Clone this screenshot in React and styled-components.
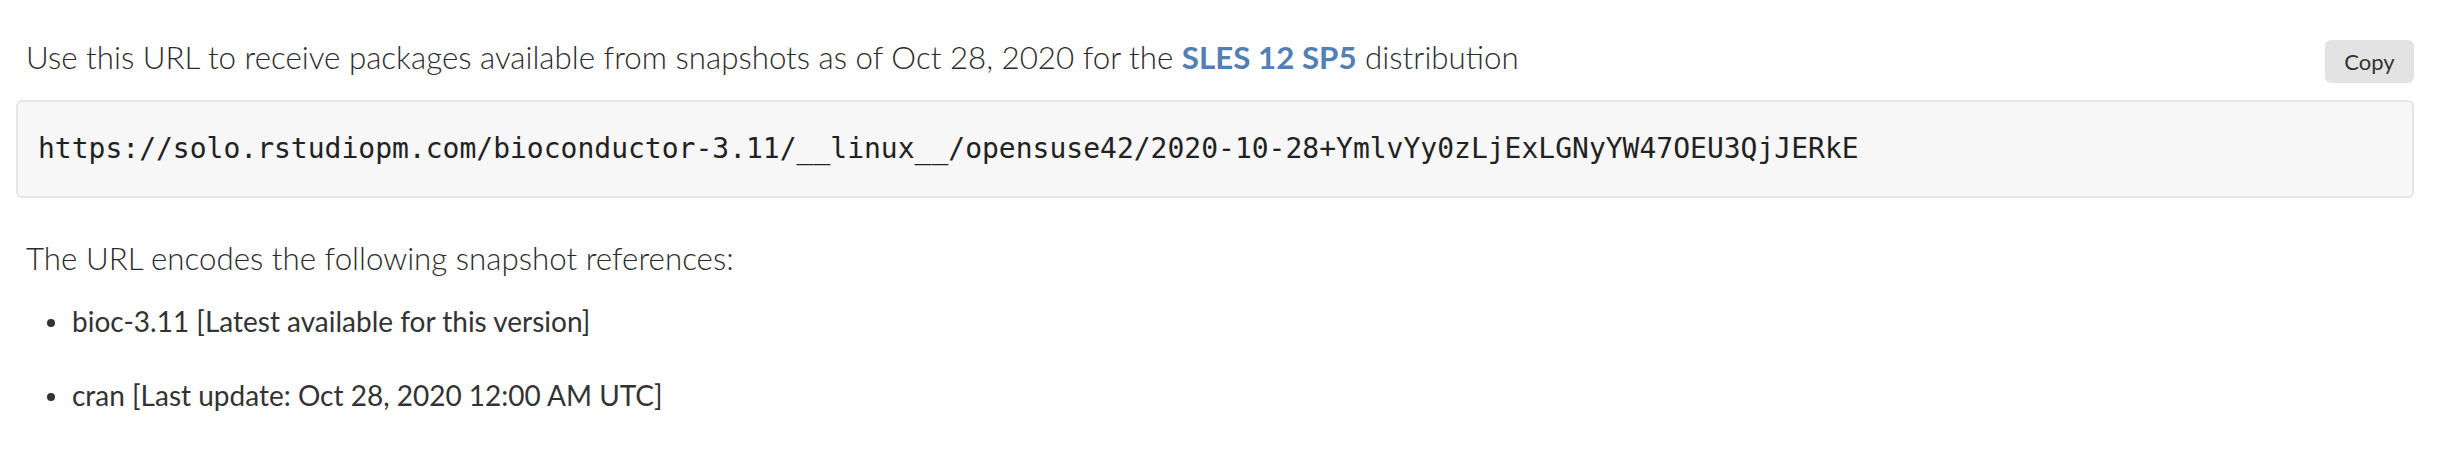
import React from 'react';
import styled, { createGlobalStyle } from 'styled-components';

const GlobalStyle = createGlobalStyle`
  html, body {
    margin: 0;
    padding: 0;
    background: #fff;
  }
  body {
    font-family: Lato, "Open Sans", sans-serif;
    color: #333;
  }
`;

const Page = styled.div`
  padding: 38px 50px 0 16px;
`;

const Header = styled.div`
  display: flex;
  justify-content: space-between;
  align-items: flex-start;
`;

const Text = styled.p`
  margin: ${p => p.$mt || 0} 0 0 10px;
  font-size: 31.3px;
  line-height: 38px;
  font-weight: 300;
  color: #2b2b2b;
`;

const Link = styled.a`
  color: #5380b4;
  font-weight: 700;
  text-decoration: none;
`;

const CopyButton = styled.button`
  margin-top: 2px;
  width: 89px;
  height: 43px;
  border: none;
  border-radius: 6px;
  background: #e3e3e3;
  color: #333;
  font-family: Lato, sans-serif;
  font-size: 22px;
  padding: 0;
  cursor: pointer;
`;

const UrlBox = styled.div`
  margin-top: 17px;
  padding: 30px 20px 30px;
  border: 2px solid #e5e5e5;
  border-radius: 6px;
  background: #f7f7f7;
`;

const Code = styled.code`
  display: block;
  font-family: "DejaVu Sans Mono", "Liberation Mono", monospace;
  font-size: 28px;
  line-height: 34px;
  color: #222;
`;

const List = styled.ul`
  list-style: none;
  margin: 27px 0 0;
  padding: 0 0 0 31px;
  display: flex;
  flex-direction: column;
  gap: 40px;
`;

const Item = styled.li`
  display: flex;
  align-items: flex-start;
  font-size: 28px;
  line-height: 34px;
  color: #333;

  &::before {
    content: '';
    flex: none;
    width: 8px;
    height: 8px;
    margin: 15px 17px 0 0;
    border-radius: 50%;
    background: #333;
  }
`;

export default function App() {
  return (
    <>
      <GlobalStyle />
      <Page>
        <Header>
          <Text>
            Use this URL to receive packages available from snapshots as of Oct 28, 2020 for the{' '}
            <Link href="#">SLES 12 SP5</Link> distribution
          </Text>
          <CopyButton>Copy</CopyButton>
        </Header>
        <UrlBox>
          <Code>https://solo.rstudiopm.com/bioconductor-3.11/__linux__/opensuse42/2020-10-28+YmlvYy0zLjExLGNyYW47OEU3QjJERkE</Code>
        </UrlBox>
        <Text $mt="41px">The URL encodes the following snapshot references:</Text>
        <List>
          <Item>bioc-3.11 [Latest available for this version]</Item>
          <Item>cran [Last update: Oct 28, 2020 12:00 AM UTC]</Item>
        </List>
      </Page>
    </>
  );
}
